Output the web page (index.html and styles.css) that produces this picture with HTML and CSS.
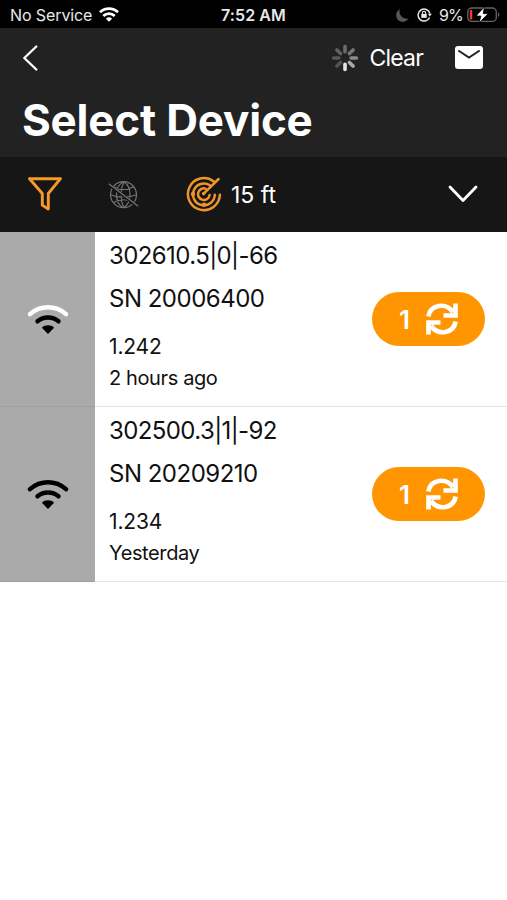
FILE: index.html
```html
<!DOCTYPE html>
<html lang="en">
<head>
<meta charset="utf-8">
<title>Select Device</title>
<link rel="stylesheet" href="styles.css">
</head>
<body>
<div class="status">
  <div class="carrier"><span class="carrier-name">No Service</span>
    <svg width="20" height="15" viewBox="0 0 20 15" fill="none" stroke="#fff" stroke-width="2.8"><path d="M1 5.3a13 13 0 0 1 18 0M4.3 8.9a8.2 8.2 0 0 1 11.4 0"/><path d="M10 14.8 6.9 11.8a4.5 4.5 0 0 1 6.2 0z" fill="#fff" stroke="none"/></svg>
  </div>
  <div class="time">7:52 AM</div>
  <div class="indicators">
    <svg class="moon" width="13" height="13" viewBox="0 0 13 13"><path d="M4 .3A6.6 6.6 0 1 0 12.7 9.2 6.8 6.8 0 0 1 4 .3z" fill="#575757"/></svg>
    <svg class="lock" width="15" height="14" viewBox="0 0 15 14" fill="none" stroke="#e8e8e8" stroke-width="1.5"><path d="M12.6 9.5A6 6 0 1 1 12.9 5.5"/><path d="M10.8 5.7h4l-2 2.7z" fill="#e8e8e8" stroke="none"/><path d="M5.4 6V5a1.6 1.6 0 0 1 3.2 0v1" stroke-width="1.1"/><path d="M4.3 5.9h5.4v4H4.3z" fill="#e8e8e8" stroke="none"/></svg>
    <span class="percent">9%</span>
    <svg class="battery" width="33" height="18" viewBox="0 0 33 18"><rect x=".8" y="2" width="28.5" height="13.4" rx="4" fill="none" stroke="#666" stroke-width="1.3"/><path d="M31 6.3c1.8.7 1.8 4.1 0 4.8z" fill="#666"/><rect x="2.8" y="4" width="2.5" height="9.4" rx="1" fill="#f5382e"/><path d="M17.5.8 9 10h4.8l-1.7 7.1L21.2 7.6h-5z" fill="#fff" stroke="#000" stroke-width=".8"/></svg>
  </div>
</div>
<header class="header">
  <div class="nav">
    <svg class="back" width="17" height="26" viewBox="0 0 17 26" fill="none" stroke="#fff" stroke-width="2.3" stroke-linecap="round" stroke-linejoin="round"><path d="M14.3 1.5 2.3 13l12 11.5"/></svg>
    <svg class="spinner" width="28" height="28" viewBox="-14 -14 28 28" stroke-width="3.6" stroke-linecap="round"><path d="M0-11.4v5.2" stroke="#6c6c6c"/><path d="m8.1-8.1-3.7 3.7" stroke="#777"/><path d="M11.4 0H6.2" stroke="#8b8b8b"/><path d="m8.1 8.1-3.7-3.7" stroke="#aaa"/><path d="M0 11.4V6.2" stroke="#e6e6e6"/><path d="m-8.1 8.1 3.7-3.7" stroke="#515151"/><path d="M-11.4 0h5.2" stroke="#575757"/><path d="m-8.1-8.1 3.7 3.7" stroke="#606060"/></svg>
    <span class="clear">Clear</span>
    <svg class="mail" width="28" height="23" viewBox="0 0 28 23"><rect width="28" height="23" rx="3" fill="#fff"/><path d="m3.3 4.5 10.7 7 10.7-7" fill="none" stroke="#222" stroke-width="2"/></svg>
  </div>
  <h1 class="title">Select Device</h1>
</header>
<div class="toolbar">
  <svg class="funnel" width="34" height="34" viewBox="0 0 34 34" fill="none" stroke="#f79a2b" stroke-width="2.9" stroke-linejoin="round"><path d="M1.5 1.7h31L20.3 16.5v15.6l-6-4V16.5z"/></svg>
  <svg class="globe" width="31" height="30" viewBox="0 0 31 30" fill="none" stroke="#737373" stroke-width="1.2"><circle cx="15.5" cy="14.7" r="13"/><path d="M15.5 1.7C6.5 6 6 22 15 27.7M16 1.7c-4 8-4 18 0 26M16 1.7C24 7 24 22 16 27.7M5.5 6.5c6 4 14 4 20.5 0M2.5 14.7c7 3 19 3 26 0M5.5 22.6c6-3.6 14-3.6 20.5 0"/><path d="M.8 4.4 30.2 27" stroke="#161616" stroke-width="3"/><path d="M.8 3.8 30.2 26.2" stroke-width="1.3"/></svg>
  <svg class="radar" width="36" height="36" viewBox="0 0 36 36" fill="none" stroke="#ef9428" stroke-width="2.5" stroke-linecap="round"><path d="M27.5 5.3A16 16 0 1 0 33.9 18.8M23.6 9.1A10.9 10.9 0 1 0 28.8 18.8M19.5 12.6A5.8 5.8 0 1 0 23.6 19.1M17.7 17.6 32.6 3"/><g fill="#ef9428" stroke="none"><circle cx="7" cy="18" r="2.2"/><circle cx="18" cy="28.8" r="2.2"/><circle cx="17.7" cy="17.6" r="1.8"/></g></svg>
  <span class="range">15 ft</span>
  <svg class="expand" width="30" height="18" viewBox="0 0 30 18" fill="none" stroke="#fff" stroke-width="2.8" stroke-linecap="round" stroke-linejoin="round"><path d="m2 2 13 13.5L28 2"/></svg>
</div>
<main>
  <section class="device">
    <div class="signal"><svg width="42" height="32" viewBox="0 0 42 32" fill="none" stroke="#000" stroke-width="4.4" stroke-linecap="round"><path d="M3 10.2C13.5 1 28.5 1 39 10.2" stroke="#fff"/><path d="M10.5 17.3a16.5 16.5 0 0 1 21 0"/><path d="M21 30 14.9 23.7c3-3.2 9.2-3.2 12.2 0z" fill="#000" stroke="none"/></svg></div>
    <div class="info">
      <div class="name">302610.5|0|-66</div>
      <div class="serial">SN 20006400</div>
      <div class="version">1.242</div>
      <div class="seen">2 hours ago</div>
    </div>
    <div class="sync"><span class="count">1</span><svg width="34" height="34" viewBox="0 0 34 34" fill="none" stroke="#fff" stroke-width="4.7"><path d="M3.3 14.5C5.5 2.5 20.5 0 28 10M30.5 1.5v12H18.5M30.7 19.5C28.5 31.5 13.500 34 6 24M3.500 32.500V20.500h12"/></svg></div>
  </section>
  <section class="device">
    <div class="signal"><svg width="42" height="32" viewBox="0 0 42 32" fill="none" stroke="#000" stroke-width="4.4" stroke-linecap="round"><path d="M3 10.2C13.5 1 28.5 1 39 10.2"/><path d="M10.5 17.3a16.5 16.5 0 0 1 21 0"/><path d="M21 30 14.9 23.7c3-3.2 9.2-3.2 12.2 0z" fill="#000" stroke="none"/></svg></div>
    <div class="info">
      <div class="name">302500.3|1|-92</div>
      <div class="serial">SN 20209210</div>
      <div class="version">1.234</div>
      <div class="seen">Yesterday</div>
    </div>
    <div class="sync"><span class="count">1</span><svg width="34" height="34" viewBox="0 0 34 34" fill="none" stroke="#fff" stroke-width="4.7"><path d="M3.3 14.5C5.5 2.5 20.5 0 28 10M30.5 1.5v12H18.5M30.7 19.5C28.5 31.5 13.5 34 6 24M3.5 32.5V20.5h12"/></svg></div>
  </section>
</main>
</body>
</html>
```
FILE: styles.css
```css
* { box-sizing: border-box; }
body { margin: 0; background: #fff; color: #111; font-family: Inter, "Liberation Sans", sans-serif; white-space: nowrap; }
svg { display: block; flex: none; }
.status { height: 28px; background: #000; color: #e8e8e8; display: grid; grid-template-columns: 1fr auto 1fr; align-items: center; padding: 2px 8px 0 10px; font-size: 16px; line-height: 26px; }
.carrier { display: flex; align-items: center; gap: 7px; }
.carrier-name { letter-spacing: -0.1px; }
.carrier svg { margin-top: -2px; }
.time { font-weight: 600; letter-spacing: 0.1px; margin-left: -2px; }
.indicators { display: flex; align-items: center; justify-content: flex-end; }
.lock { margin-left: 8px; }
.percent { margin-left: 7px; letter-spacing: -0.8px; }
.battery { margin-left: 4px; margin-right: -1px; }
.header { height: 129px; background: #222; color: #fff; }
.nav { height: 60px; display: flex; align-items: center; padding: 0 24px 0 22px; }
.spinner { margin-left: auto; }
.clear { margin-left: 10px; font-size: 23px; letter-spacing: -0.8px; }
.mail { margin-left: 32px; margin-top: -1px; }
.title { margin: 0; padding-left: 22px; font-size: 44px; line-height: 64px; font-weight: 700; letter-spacing: -0.2px; }
.toolbar { height: 75px; background: #161616; color: #fff; display: flex; align-items: center; padding: 0 29px 0 28px; }
.funnel { margin-top: -2px; }
.globe { margin-left: 46px; }
.radar { margin-left: 47px; margin-top: -1px; }
.range { margin-left: 9px; font-size: 23px; }
.expand { margin-left: auto; margin-top: -1px; }
.device { height: 175px; display: flex; align-items: center; border-bottom: 1px solid #e4e4e4; }
.signal { width: 95px; height: 175px; padding-top: 2px; background: #aaa; border-bottom: 1px solid #a0a0a0; display: flex; align-items: center; justify-content: center; align-self: flex-start; }
.info { flex: 1; align-self: flex-start; padding: 3px 0 0 14px; }
.name { font-size: 24px; line-height: 42px; letter-spacing: -0.6px; }
.serial { font-size: 24px; line-height: 43px; letter-spacing: -0.5px; }
.version { margin-top: 11px; font-size: 21px; line-height: 32px; letter-spacing: -0.15px; }
.seen { margin-top: -1px; font-size: 20px; line-height: 32px; letter-spacing: -0.38px; }
.sync { width: 113px; height: 54px; margin-right: 22px; border-radius: 27px; background: #ff9500; color: #fff; display: flex; align-items: center; padding-left: 27px; }
.count { font-size: 26px; font-weight: 600; width: 26px; }
```
